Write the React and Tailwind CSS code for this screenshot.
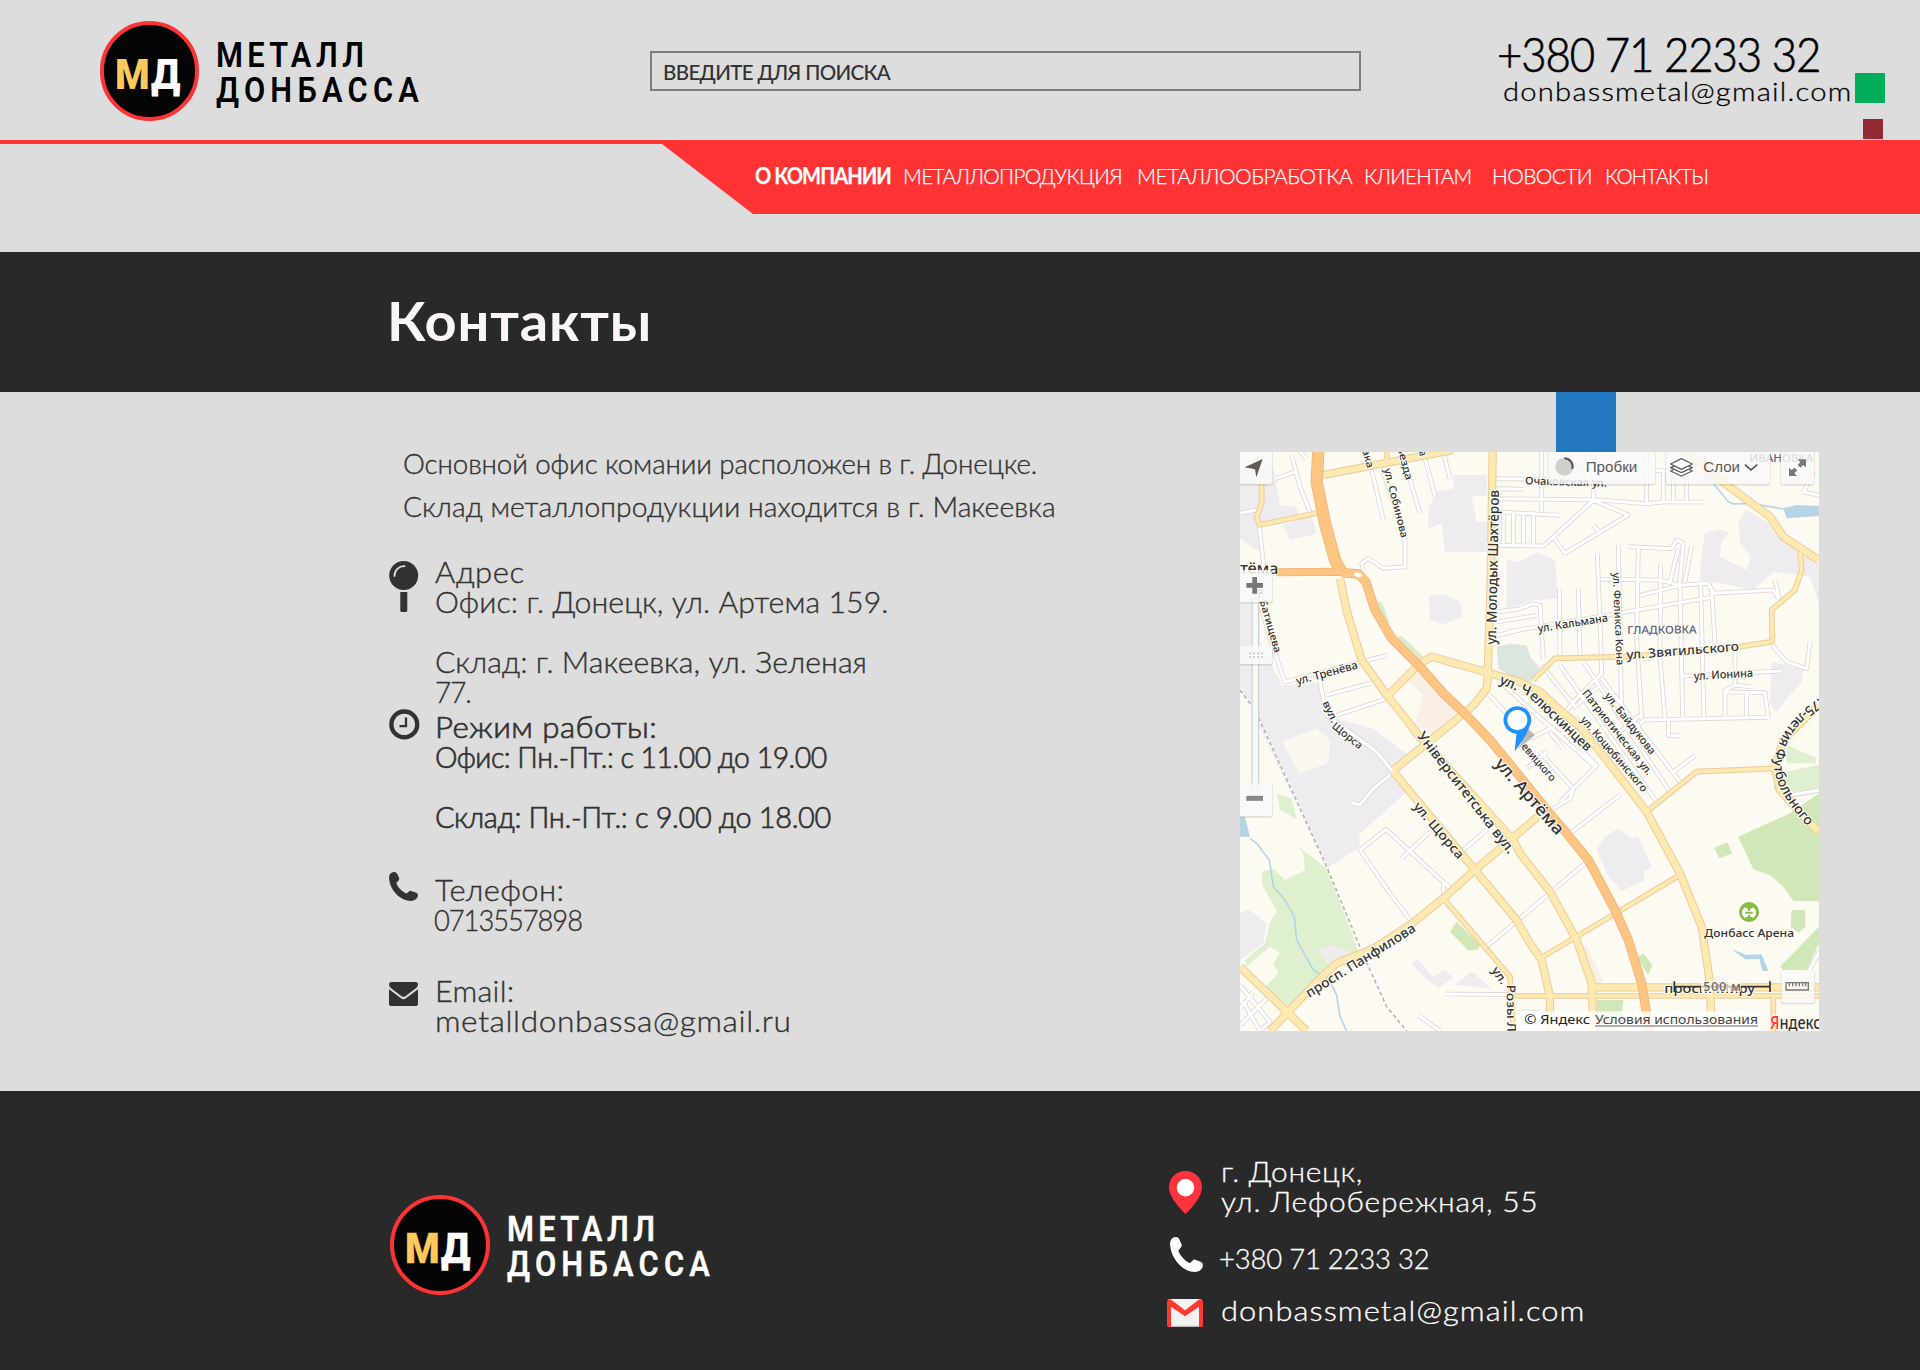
import React, { useLayoutEffect, useRef, useState } from 'react';

/* One line of text fitted to the given width, partly by glyph width and partly by tracking. */
function Line({ w, k, className = '', children }) {
  const ref = useRef(null);
  const [fit, setFit] = useState({ scale: 1, tracking: 0 });
  useLayoutEffect(() => {
    const natural = ref.current.offsetWidth;
    const scale = k || Math.pow(w / natural, 0.6);
    setFit({ scale, tracking: (w / scale - natural) / Math.max(1, children.length - 1) });
  }, [w, k, children]);
  return (
    <div className={`whitespace-nowrap ${className}`} style={{ width: w }}>
      <span ref={ref} className="inline-block origin-left" style={{ letterSpacing: fit.tracking, transform: `scaleX(${fit.scale})` }}>{children}</span>
    </div>
  );
}

function Logo({ textClass }) {
  return (
    <div className="flex shrink-0 items-start">
      <div className="flex size-[100px] items-start justify-center rounded-full border-4 border-[#ff3333] bg-[#050505] pt-[24px] text-[43px] leading-[50px] font-black font-[Roboto,sans-serif]">
        <Line w={36} k={0.92} className="text-[#ffca5a]">М</Line>
        <Line w={31} k={0.92} className="mr-[3px] text-white">Д</Line>
      </div>
      <div className={`ml-[17px] mt-[17px] text-[35px] leading-[35px] font-semibold font-[Roboto,sans-serif] ${textClass}`}>
        <Line w={148} k={0.88}>МЕТАЛЛ</Line>
        <Line w={203} k={0.88}>ДОНБАССА</Line>
      </div>
    </div>
  );
}

const NAV = [
  { label: 'О КОМПАНИИ', w: 137, cls: 'font-bold' },
  { label: 'МЕТАЛЛОПРОДУКЦИЯ', w: 220, cls: 'ml-[11px]' },
  { label: 'МЕТАЛЛООБРАБОТКА', w: 216, cls: 'ml-[14px]' },
  { label: 'КЛИЕНТАМ', w: 108, cls: 'ml-[11px]' },
  { label: 'НОВОСТИ', w: 101, cls: 'ml-[20px]' },
  { label: 'КОНТАКТЫ', w: 104, cls: 'ml-[12px]' },
];

function PinIcon() {
  return (
    <svg width="30" height="51" viewBox="0 0 30 51">
      <circle cx="14.7" cy="14.6" r="14.5" fill="#323232" />
      <path d="M5.5 15 A9.5 9.5 0 0 1 15.5 5.2" fill="none" stroke="#ddd" strokeWidth="1.8" strokeLinecap="round" />
      <path d="M11.3 31 h7 v18.5 a1.5 1.5 0 0 1 -1.5 1.5 h-4 a1.5 1.5 0 0 1 -1.5 -1.5z" fill="#323232" />
    </svg>
  );
}
function ClockIcon() {
  return (
    <svg width="31" height="31" viewBox="0 0 31 31" fill="none" stroke="#323232">
      <circle cx="15.3" cy="15.4" r="12.9" strokeWidth="4.4" />
      <path d="M17 8.5 V17.2 H10.5" strokeWidth="2.3" />
    </svg>
  );
}
function PhoneIcon({ className, fill }) {
  return (
    <svg className={className} viewBox="0 0 29 29" preserveAspectRatio="none" fill={fill}>
      <path d="M5.2 0 C6.6 -0.1 8 0.8 9 3.6 L10.3 6.6 Q10.4 7.6 9.6 8.4 L7.4 11.1 C8.6 15.3 12.8 19.6 17.6 21.6 L20 19.5 Q21 18.4 22.2 18.9 L27.4 20.8 Q29 21.6 28.9 23.6 C28.5 26.8 25.4 29 21.8 29 C12.6 28.8 3.6 20.8 0.9 11.2 C0 7.6 -0.3 5 0.6 2.8 C1.5 0.9 3.4 0.1 5.2 0 Z" />
    </svg>
  );
}
function MailIcon() {
  return (
    <svg width="29" height="24" viewBox="0 0 29 24" fill="#323232">
      <path d="M2.4 0 H26.6 Q29 0 29 2.6 Q29 4.6 27.2 6 L16.4 14.2 Q14.5 15.5 12.6 14.2 L1.8 6 Q0 4.6 0 2.6 Q0 0 2.4 0 Z" />
      <path d="M0 7.2 L12 16.3 Q14.5 18 17 16.3 L29 7.2 V21.4 Q29 24 26.4 24 H2.6 Q0 24 0 21.4 Z" />
    </svg>
  );
}
function MapPinIcon() {
  return (
    <svg width="33" height="43" viewBox="0 0 33 43">
      <path d="M16.5 0 C25.8 0 33 7 33 16.2 C33 25.5 24 35.5 16.5 43 C9 35.5 0 25.5 0 16.2 C0 7 7.2 0 16.5 0 Z" fill="#ff333b" />
      <circle cx="16.5" cy="16.6" r="8.8" fill="#fff" />
    </svg>
  );
}
function GmailIcon() {
  return (
    <svg width="36" height="28" viewBox="0 0 36 28">
      <rect x="1" width="34" height="28" rx="1.5" fill="#f2f2f2" />
      <path d="M4 27.3 H32" stroke="#bbb" strokeWidth="1.2" />
      <path d="M0 2.4 V26.4 Q0 28 1.6 28 H4 V7.8 L18 17.2 L32 7.8 V28 H34.4 Q36 28 36 26.4 V2.4 Q35 -0.6 32 0.6 L18 11.2 L4 0.6 Q1 -0.6 0 2.4 Z" fill="#ff3a2f" />
    </svg>
  );
}

const ZONES = [
  ['#efecf0', '0,50 100,50 120,160 170,165 175,190 60,215 70,260 60,300 0,260'],
  ['#efecf0', '130,220 215,190 230,245 150,265'],
  ['#efecf0', '640,69 740,69 740,299 615,299 605,214 565,229 567,164 590,119 640,109'],
  ['#fdfaf2', '695,134 740,129 740,210 710,210'],
  ['#efecf0', '567,432 610,426 660,449 667,494 610,517 570,504'],
  ['#efecf0', '800,324 840,329 890,300 945,324 955,439 880,445 800,470'],
  ['#efecf0', '0,454 60,454 60,570 125,700 235,690 260,790 400,830 440,860 500,905 460,960 510,1010 355,1150 360,1185 260,1249 0,700'],
  ['#fbf8f0', '125,869 230,829 270,864 265,934 180,964'],
  ['#efecf0', '0,1384 25,1372 80,1414 70,1474 0,1524'],
  ['#dff0cf', '170,1179 260,1249 355,1494 290,1534 145,1664 75,1604 115,1564 100,1534 120,1504 90,1484 20,1544 15,1524 75,1474 90,1409 110,1379 65,1294 67,1259 100,1249 135,1284 195,1254 190,1204'],
  ['#efecf0', '235,1494 280,1479 340,1504 270,1544'],
  ['#dff0cf', '112,1024 155,1040 170,1100 120,1075'],
  ['#d0e7b8', '650,1409 720,1479 715,1492 685,1496 630,1439'],
  ['#b5d5e6', '0,1094 15,1094 30,1154 0,1154'],
  ['#efecf0', '530,1519 580,1574 615,1554 640,1574 595,1609 570,1589 515,1539'],
  ['#efecf0', '645,1599 695,1559 755,1609'],
  ['#faefe5', '500,680 560,650 670,760 580,850 520,830 550,730'],
  ['#d5edc9', '410,449 425,449 450,514 435,514'],
  ['#d5edc9', '470,554 485,552 550,614 535,619'],
  ['#dbe6de', '770,584 810,576 860,580 870,614 900,649 875,689 840,685 775,650'],
  ['#efecf0', '1395,244 1440,232 1470,244 1445,264 1440,314 1470,329 1520,354 1532,314 1500,269 1495,214 1520,174 1580,209 1630,254 1680,294 1737,334 1737,454 1710,374 1600,359 1540,414 1440,394 1380,384 1385,304'],
  ['#efecf0', '1595,629 1690,654 1685,690 1640,740 1610,780 1590,760'],
  ['#b5d5e6', '1630,169 1670,159 1737,162 1737,192 1640,199'],
  ['#efecf0', '1135,1129 1170,1159 1195,1154 1235,1244 1210,1259 1215,1284 1145,1317 1105,1274 1070,1194 1090,1159'],
  ['#d0e7b8', '1495,1154 1650,1084 1737,1024 1737,1347 1660,1347 1630,1304 1590,1269 1540,1252'],
  ['#def0d0', '1640,879 1730,919 1725,934 1640,934'],
  ['#def0d0', '1610,964 1737,939 1737,1019 1660,1039 1600,1014'],
  ['#d0e7b8', '1423,1187 1462,1171 1477,1204 1438,1219'],
  ['#d0e7b8', '1655,1374 1695,1374 1697,1424 1675,1442 1652,1424'],
  ['#d0e7b8', '1737,1424 1620,1544 1630,1554 1700,1554 1737,1474'],
  ['#d0e7b8', '1190,1519 1210,1504 1237,1539 1225,1569'],
  ['#d0e7b8', '1070,1644 1150,1644 1140,1737 1070,1737'],
  ['#faefe5', '1040,1480 1090,1589 1045,1600 1015,1490'],
  ['#b5d5e6', '1475,1492 1520,1509 1565,1507 1585,1557 1567,1557 1558,1521 1515,1522'],
];

const LANES = [
  '155,10 180,104 210,180', '105,80 165,60', '180,0 200,20', '0,184 50,174',
  '58,225 70,330 60,454 90,560 135,690 440,610', '395,54 430,204', '500,50 540,184', '550,0 585,132', '610,0 630,80',
  '430,60 495,254 495,344 430,349 385,319 365,334 370,354',
  '770,80 920,82', '770,110 850,112', '765,140 1080,144 1220,155 1270,150 1395,150', '770,280 910,282 940,255 1060,145 1165,189 975,304 940,255',
  '780,180 960,190', '790,180 790,280', '820,180 820,280', '850,180 850,280', '880,180 880,280', '905,0 905,180',
  '1060,0 1060,140', '1220,0 1220,155', '1270,60 1270,150', '1300,60 1300,150', '1340,60 1340,150', '1060,220 1080,244', '980,40 1330,60',
  '1072,304 1082,560 1085,664 1000,750 970,790', '1135,279 1145,800', '958,410 960,614', '1015,410 1020,614',
  '1195,290 1190,560 1205,800', '1262,334 1260,620 1275,800', '1320,400 1328,800', '1382,400 1392,800', '1415,414 1425,574',
  '1165,284 1295,290 1310,264 1330,274 1318,400', '1355,280 1335,390', '1315,290 1290,390',
  '1082,382 1260,384 1320,400 1405,394 1420,424 1600,414 1615,440', '1605,384 1618,440', '800,540 1100,490 1420,435', '1200,430 1320,400',
  '1330,672 1625,657', '1485,595 1485,700 1455,715 1455,800', '1455,720 1575,722 1585,800', '1520,720 1520,800', '1485,700 1540,705',
  '1597,580 1640,630 1700,650 1710,570', '1210,804 1585,796', '1285,800 1285,850 1320,852', '1180,840 1210,804',
  '770,480 840,470 880,455 900,460 910,620', '770,510 890,490', '770,550 840,535',
  '240,690 260,790 370,870 410,900 460,960', '260,729 390,694', '290,790 440,740',
  '335,1052 360,1058 400,1010 455,965', '610,1330 610,1290 438,1132 360,1194 450,1324 515,1409', '485,1219 570,1139', '610,1290 640,1315',
  '670,1194 740,1134', '740,1484 870,1374 1035,1234', '990,1144 1140,1029', '870,860 950,820 1070,940 960,1050',
  '900,900 1000,1010 990,1040 940,1070', '740,720 840,830', '780,690 1060,940', '860,950 920,900', '960,850 1010,800 1050,850', '930,840 970,890',
  '905,640 1010,770', '960,640 1250,1050', '1030,630 1290,1020', '1085,680 1320,990', '1300,960 1365,910', '1010,760 1080,700', '1140,840 1200,790',
  '615,1626 830,1628', '535,1690 600,1737', '0,1600 90,1710 60,1737', '0,1720 80,1640', '10,1650 60,1737', '0,1670 40,1620', '830,1680 900,1680',
  '1737,1500 1700,1570', '1650,1030 1737,1015', '1690,120 1737,130', '1690,120 1720,60',
];
const YELLOW_THIN = [
  '610,1339 810,1574 820,1737', '900,1519 1320,1269', '1220,1079 1370,959 1605,949',
  '1680,300 1685,354 1665,414 1595,474 1597,569 1500,584 1160,614 945,619 880,684', '65,94 65,154 50,194 58,219 235,182',
  '440,0 440,30', '810,1632 1737,1632', '1600,1630 1600,1737',
];
const YELLOW = [
  '250,69 640,-6', '300,380 322,484 365,624 440,729 500,804 530,844 820,1164 840,1204 930,1319 1010,1464 1055,1594 1060,1737',
  '460,959 705,1254 830,1404 870,1474 905,1524 930,1634 930,1737', '745,664 740,710 700,760 640,810 460,955', '758,0 752,400 743,664',
  '440,734 540,634 575,614 750,664 840,690 900,719 970,784 1020,824 1100,924 1220,1079 1320,1264 1385,1424 1410,1594 1415,1737',
  '90,1737 240,1580 290,1534 400,1490 510,1419 610,1339 705,1254 870,1114 920,1070', '0,1544 145,1684 200,1737',
  '1737,760 1700,794 1630,864 1605,949 1620,1014 1690,1094 1737,1139', '1340,0 1440,84 1590,194 1630,254 1737,325', '1055,1606 1737,1606',
];
const ORANGE = [
  ['235,0 230,89 255,214 285,324 305,362', 32],
  ['110,361 300,359 355,366 378,390', 19],
  ['305,362 355,366 378,390 405,474 455,559 540,644 610,724 680,790 750,864 840,974 920,1074 980,1144 1045,1224 1125,1374 1165,1464 1205,1594 1228,1737', 23],
];

/* text, size, baseline start x/y, baseline end x/y, colour */
const LABELS = [
  ['ул. Молодых Шахтёров', 42, 768, 578, 777, 114], ['ул. Собинова', 31, 432, 52, 484, 259], ['ака', 31, 366, -6, 382, 50],
  ['ьезда', 31, 472, -12, 498, 86], ['а', 31, 536, 0, 540, 14], ['тёма', 46, 0, 364, 115, 366], ['ул. Батищева', 30, 44, 396, 104, 604],
  ['ул. Тренёва', 34, 172, 699, 355, 649], ['вул.', 31, 247, 752, 276, 815], ['Щорса', 31, 274, 826, 358, 893],
  ['Університетська вул.', 41, 530, 852, 806, 1208], ['ул. Щорса', 38, 518, 1064, 655, 1224], ['просп. Панфилова', 40, 208, 1638, 530, 1436],
  ['ул.', 36, 753, 1555, 785, 1600], ['Розы Л', 36, 800, 1598, 802, 1740], ['ул. Ч', 41, 776, 694, 866, 732], ['елюскинцев', 41, 866, 735, 1040, 900],
  ['Патриотическая ул.', 32, 1025, 724, 1222, 972], ['ул. Байдукова', 32, 1092, 732, 1232, 910], ['ул. Коцюбинского', 32, 1020, 804, 1208, 1022],
  ['евицкого', 32, 842, 885, 934, 990], ['ул. Артёма', 50, 762, 936, 950, 1152], ['ул. Феликса Кона', 31, 1118, 362, 1130, 640],
  ['ул. Кальмана', 33, 895, 541, 1105, 508], ['ГЛАДКОВКА', 33, 1162, 546, 1370, 544, '#5f607c'], ['ул. Звягильского', 38, 1160, 622, 1498, 596],
  ['ул. Ионина', 34, 1362, 684, 1540, 674], ['Очаковская ул.', 32, 855, 97, 1100, 104], ['ИВАНОВКА', 34, 1528, 30, 1720, 30, '#5f607c'],
  ['Донбасс Арена', 34, 1393, 1454, 1662, 1454], ['просп. Миру', 38, 1273, 1624, 1545, 1624],
];

function Label({ d }) {
  const [t, s, x1, y1, x2, y2, c = '#333'] = d;
  const len = Math.hypot(x2 - x1, y2 - y1);
  const a = (Math.atan2(y2 - y1, x2 - x1) * 180) / Math.PI;
  return (
    <text transform={`translate(${x1} ${y1}) rotate(${a})`} fontSize={s} textLength={len} lengthAdjust="spacingAndGlyphs"
      fill={c} stroke="#fffdf6" strokeWidth="6" strokeLinejoin="round" paintOrder="stroke">{t}</text>
  );
}
const roads = (list, stroke, width) =>
  list.map((p, i) => <polyline key={i} points={p} fill="none" stroke={stroke} strokeWidth={width} strokeLinejoin="round" />);

function Button({ x, y, w, h }) {
  return (
    <g>
      <rect x={x - 2} y={y} width={w + 4} height={h + 5} rx="10" fill="#000" opacity="0.1" />
      <rect x={x} y={y} width={w} height={h} rx="8" fill="#fff" opacity="0.8" />
    </g>
  );
}

function CityMap() {
  return (
    <svg className="block size-[579px] font-medium font-['Noto_Sans',sans-serif]" viewBox="0 0 1737 1737">
      <rect width="1737" height="1737" fill="#fdfaf2" />
      {ZONES.map(([c, p], i) => <polygon key={i} points={p} fill={c} />)}
      <polyline points="30,1159 50,1174 88,1224 100,1304 135,1344 163,1394 170,1464 220,1554 270,1589 290,1629 300,1694 320,1737" fill="none" stroke="#b5d5e6" strokeWidth="5" />
      <polyline points="1385,64 1420,94 1465,149 1480,156 1530,154 1630,171" fill="none" stroke="#b5d5e6" strokeWidth="5" />
      {roads(LANES, '#dcd7d3', 14)}
      {roads(LANES, '#ffffff', 9)}
      <polyline points="0,714 45,774 260,1244 370,1509 440,1664 500,1737" fill="none" stroke="#fff" strokeWidth="6" />
      <polyline points="0,714 45,774 260,1244 370,1509 440,1664 500,1737" fill="none" stroke="#b4b4b4" strokeWidth="5" strokeDasharray="12 8" />
      {roads(YELLOW_THIN, '#eccb98', 17)}
      {roads(YELLOW, '#eccb98', 25)}
      {roads(YELLOW_THIN, '#feeab0', 11)}
      {roads(YELLOW, '#feeab0', 19)}
      {ORANGE.map(([p, w], i) => <g key={i}>{roads([p], '#efb37a', w + 5)}</g>)}
      {ORANGE.map(([p, w], i) => <g key={i}>{roads([p], '#fdc581', w)}</g>)}
      <ellipse cx="354" cy="368" rx="12" ry="7" fill="#fffdf6" transform="rotate(12 354 368)" />
      {LABELS.map((d, i) => <Label key={i} d={d} />)}
      <path id="bend" d="M1737 738 Q1600 830 1603 955 Q1618 1040 1737 1160" fill="none" />
      <text fontSize="41" fill="#333" stroke="#fffdf6" strokeWidth="6" paintOrder="stroke"><textPath href="#bend">.75-летия Футбольного</textPath></text>

      <circle cx="1527" cy="1380" r="30" fill="#83bd41" />
      <path d="M1514 1366 Q1527 1376 1540 1366 L1548 1376 V1388 L1540 1398 Q1527 1388 1514 1398 L1506 1388 V1376 Z" fill="#fff" />
      <path d="M1516 1382 H1538 M1527 1364 V1376 M1527 1388 V1400" stroke="#83bd41" strokeWidth="6" />

      <polygon points="835,890 885,850 865,830" fill="#000" opacity="0.25" />
      <path d="M868 822 Q862 850 824 898 L830 840 Z" fill="#1e90ff" />
      <circle cx="832" cy="804" r="36" fill="#fff" stroke="#1e90ff" strokeWidth="11" />

      <Button x={-10} y={-10} w={107} h={106} />
      <polygon points="14,46 68,21 49,76 45,52" fill="#5f5b50" />
      <rect x="36" y="440" width="20" height="570" fill="#f8f8f6" stroke="#c8c8c8" strokeWidth="3" />
      <Button x={-10} y={354} w={107} h={96} />
      <path d="M19 400 H69 M44 375 V425" stroke="#777" strokeWidth="14" />
      <Button x={-10} y={582} w={107} h={54} />
      <path d="M28 604 H68 M28 615 H68" stroke="#aaa" strokeWidth="4" strokeDasharray="4 8" />
      <Button x={-10} y={994} w={107} h={98} />
      <path d="M19 1039 H69" stroke="#878787" strokeWidth="15" />

      <Button x={925} y={-10} w={320} h={106} />
      <Button x={1278} y={-10} w={312} h={106} />
      <Button x={1622} y={-10} w={100} h={106} />
      <circle cx="973" cy="44" r="27" fill="#cfcfcb" />
      <path d="M973 19 A25 25 0 0 1 997 51" fill="none" stroke="#555" strokeWidth="6" />
      <g fontSize="43" fill="#5a5a5a" className="font-normal font-['Liberation_Sans',sans-serif]">
        <text x="1037" y="61" textLength="155" lengthAdjust="spacingAndGlyphs">Пробки</text>
        <text x="1390" y="61" textLength="110" lengthAdjust="spacingAndGlyphs">Слои</text>
      </g>
      <path d="M1515 38 L1533 54 L1552 38" fill="none" stroke="#555" strokeWidth="5" />
      <g fill="#fff" stroke="#5f5f5f" strokeWidth="4" strokeLinejoin="round">
        <path d="M1292 57 L1324 72 L1357 57 L1324 42 Z" />
        <path d="M1292 47 L1324 62 L1357 47 L1324 32 Z" />
        <path d="M1292 36 L1324 52 L1357 36 L1324 20 Z" />
      </g>
      <path d="M1673 22 H1698 V46 L1689 39 L1681 47 L1673 39 L1681 31 Z M1671 72 H1647 V47 L1655 55 L1663 47 L1672 55 L1663 64 Z" fill="#777" />

      <path d="M1303 1604 H1590 M1303 1588 V1620 M1590 1588 V1620" stroke="#333" strokeWidth="5" />
      <rect x="1383" y="1586" width="120" height="34" fill="#fffdf2" opacity="0.7" />
      <text x="1390" y="1616" fontSize="36" fill="#666" textLength="112">500 м</text>
      <Button x={1624} y={1554} w={100} h={98} />
      <path d="M1638 1592 H1705 V1614 H1638 Z M1648 1593 V1603 M1658 1593 V1603 M1668 1593 V1603 M1678 1593 V1603 M1688 1593 V1603 M1697 1593 V1603" fill="none" stroke="#777" strokeWidth="4" />
      <rect x="830" y="1678" width="730" height="59" fill="#fff" opacity="0.8" />
      <g fontSize="37" className="font-normal">
        <text x="853" y="1717" fill="#222" textLength="197" lengthAdjust="spacingAndGlyphs">© Яндекс</text>
        <text x="1065" y="1717" fill="#444" textLength="489" lengthAdjust="spacingAndGlyphs">Условия использования</text>
      </g>
      <path d="M1065 1722 H1554" stroke="#666" strokeWidth="3" />
      <text x="1590" y="1731" fontSize="56" fill="#333" stroke="#fff" strokeWidth="5" paintOrder="stroke" textLength="152" lengthAdjust="spacingAndGlyphs"><tspan fill="#f33">Я</tspan>ндекс</text>
    </svg>
  );
}

export default function App() {
  return (
    <div className="flex h-[1370px] w-[1920px] flex-col overflow-hidden bg-[#dddddd] font-[Lato,sans-serif] font-light text-[#323232]">
      <header className="flex h-[140px] items-start">
        <div className="ml-[100px] mt-[21px] w-[319px]"><Logo textClass="text-black" /></div>
        <div className="ml-[231px] mt-[51px] flex h-[40px] w-[711px] items-center border-2 border-[#7d7d7d] pl-[11px] text-[22px] font-medium">
          <Line w={228}>ВВЕДИТЕ ДЛЯ ПОИСКА</Line>
        </div>
        <div className="ml-[136px] mt-[34px] text-black [-webkit-text-stroke:0.3px]">
          <Line w={324} className="text-[47px] leading-[40px] [-webkit-text-stroke:0.7px]">+380 71 2233 32</Line>
          <Line w={348} className="ml-[6px] mt-[3px] text-[26px] leading-[28px]">donbassmetal@gmail.com</Line>
        </div>
        <div className="ml-[4px] mt-[73px] flex flex-col items-center gap-4">
          <div className="size-[30px] bg-[#00ae5c]" />
          <div className="ml-[6px] size-[20px] bg-[#912a35]" />
        </div>
      </header>

      <nav className="h-[74px] border-t-4 border-[#ff3333]">
        <div className="ml-[662px] flex h-[70px] items-center bg-[#ff3333] pb-[8px] pl-[93px] text-[22px] text-white [-webkit-text-stroke:0.25px] [clip-path:polygon(0_0,100%_0,100%_100%,91px_100%)]">
          {NAV.map((n) => <Line key={n.label} w={n.w} className={n.cls}>{n.label}</Line>)}
        </div>
      </nav>

      <section className="mt-[38px] h-[140px] bg-[#292929] pl-[387px] pt-[39px] text-[54px] leading-[60px] font-bold text-[#f9f6f5]">
        <Line w={264}>Контакты</Line>
      </section>

      <main className="flex h-[699px] [-webkit-text-stroke:0.35px]">
        <div className="w-[1240px] pl-[389px] pt-[50px]">
          <div className="ml-[14px] text-[28px] leading-[43px]">
            <Line w={634}>Основной офис комании расположен в г. Донецке.</Line>
            <Line w={653}>Склад металлопродукции находится в г. Макеевка</Line>
          </div>
          <div className="mt-[28px] grid grid-cols-[46px_1fr] text-[30px] leading-[30px]">
            <div className="pt-[5px]"><PinIcon /></div>
            <div className="h-[155px]">
              <Line w={89}>Адрес</Line>
              <Line w={453}>Офис: г. Донецк, ул. Артема 159.</Line>
              <Line w={432} className="mt-[30px]">Склад: г. Макеевка, ул. Зеленая</Line>
              <Line w={37}>77.</Line>
            </div>
            <div><div className="-mt-[2px]"><ClockIcon /></div></div>
            <div className="h-[163px] [-webkit-text-stroke:0.7px]">
              <Line w={222}>Режим работы:</Line>
              <Line w={392}>Офис: Пн.-Пт.: с 11.00 до 19.00</Line>
              <Line w={396} className="mt-[30px]">Склад: Пн.-Пт.: с 9.00 до 18.00</Line>
            </div>
            <div><PhoneIcon className="-mt-[2px] h-[29px] w-[29px]" fill="#323232" /></div>
            <div className="h-[101px]">
              <Line w={129}>Телефон:</Line>
              <Line w={149} className="-ml-px">0713557898</Line>
            </div>
            <div className="pt-[7px]"><MailIcon /></div>
            <div>
              <Line w={79}>Email:</Line>
              <Line w={356}>metalldonbassa@gmail.ru</Line>
            </div>
          </div>
        </div>
        <div className="[-webkit-text-stroke:0]">
          <div className="ml-[316px] size-[60px] bg-[#2478c0]" />
          <CityMap />
        </div>
      </main>

      <footer className="flex h-[279px] bg-[#292929] text-white [-webkit-text-stroke:0.3px]">
        <div className="ml-[390px] mt-[104px] w-[777px]"><Logo textClass="text-white" /></div>
        <div className="mt-[65px] grid h-[170px] grid-cols-[54px_1fr] grid-rows-[87px_52px_31px] text-[28px] leading-[30px]">
          <div className="pl-[2px] pt-[15px]"><MapPinIcon /></div>
          <div>
            <Line w={141}>г. Донецк,</Line>
            <Line w={317}>ул. Лефобережная, 55</Line>
          </div>
          <div className="pl-[3px]"><PhoneIcon className="-mt-[6px] h-[35px] w-[33px]" fill="#fff" /></div>
          <Line w={211} className="-ml-[2px]">+380 71 2233 32</Line>
          <div className="pt-[4px]"><GmailIcon /></div>
          <Line w={363}>donbassmetal@gmail.com</Line>
        </div>
      </footer>
    </div>
  );
}
